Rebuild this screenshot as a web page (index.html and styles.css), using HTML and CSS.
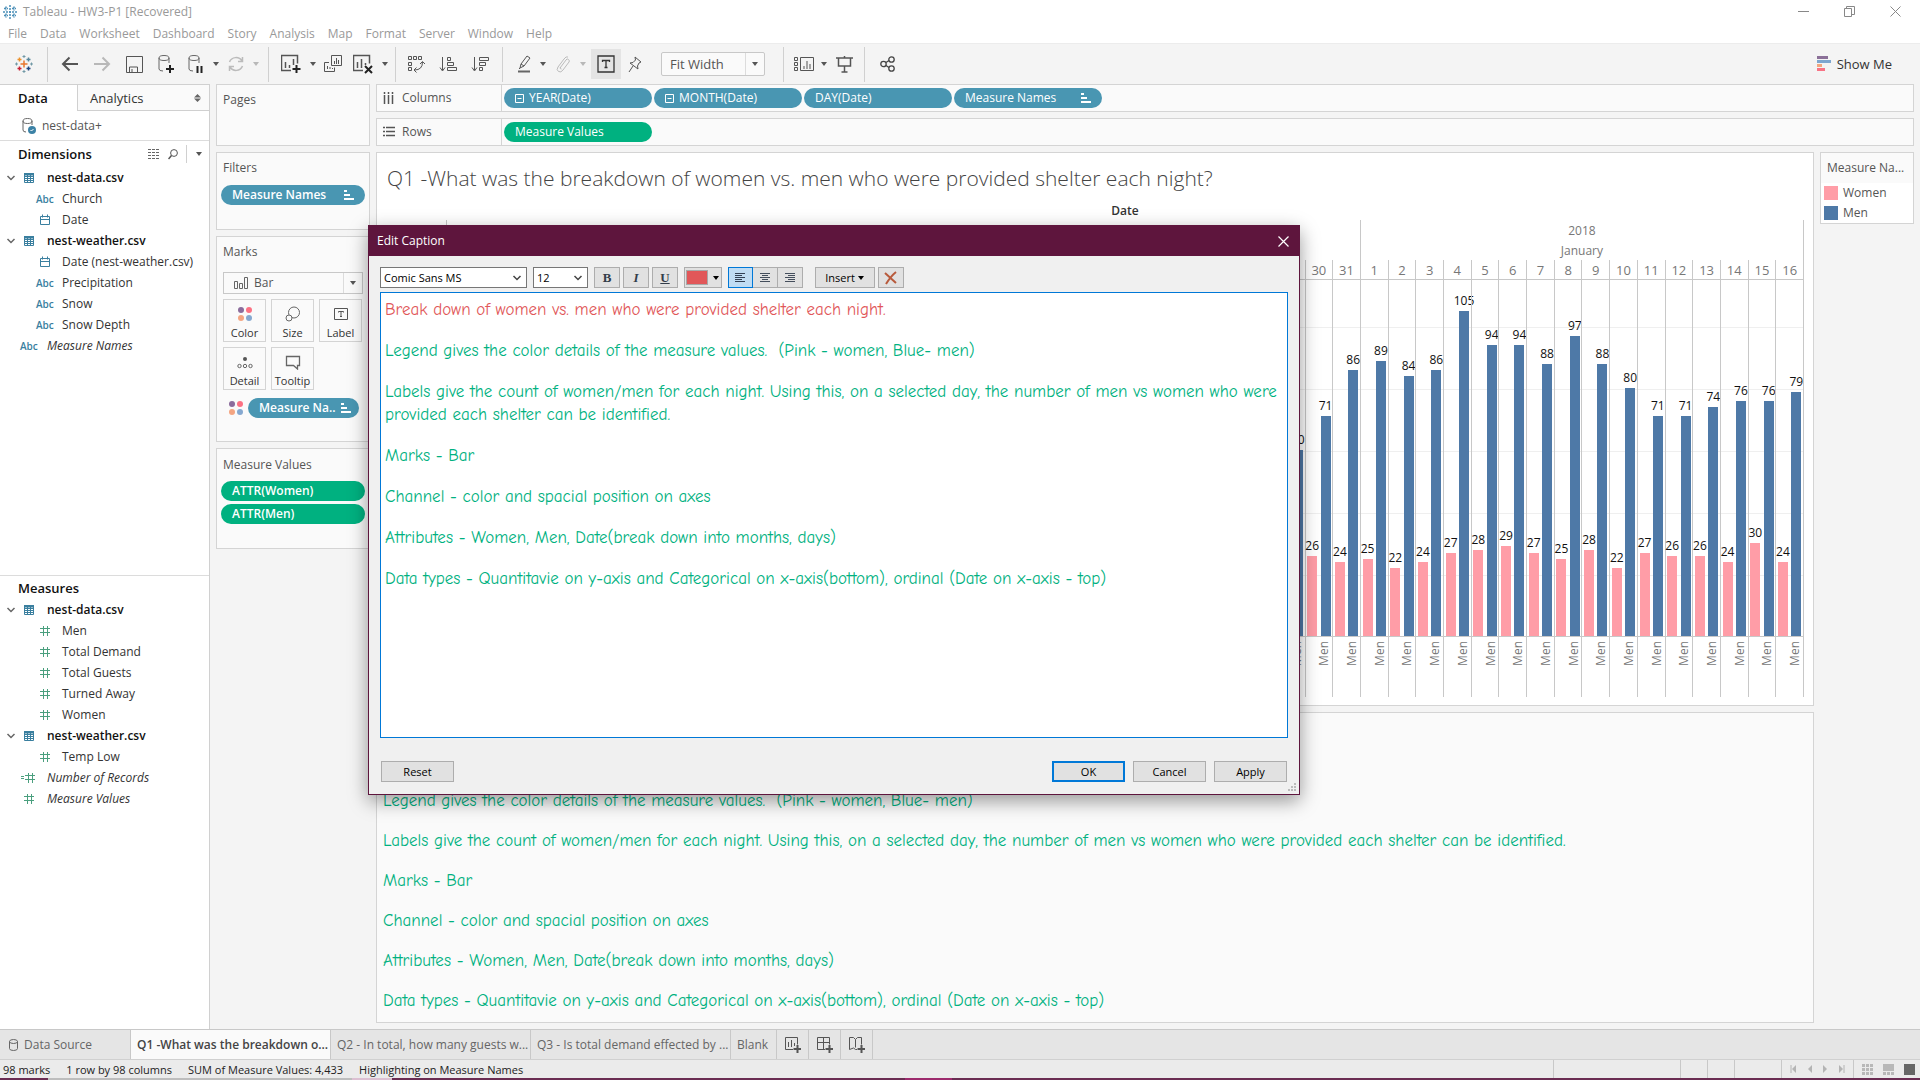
FILE: index.html
```html
<!DOCTYPE html>
<html lang="en">
<head>
<meta charset="utf-8">
<title>Tableau - HW3-P1 [Recovered]</title>
<link rel="stylesheet" href="styles.css">
</head>
<body>
<svg class="sprite" aria-hidden="true">
  <symbol id="caret" viewBox="0 0 8 6"><path d="M1 1h6L4 5z" fill="currentColor"/></symbol>
  <symbol id="chev" viewBox="0 0 10 10"><path d="M1.500 3L5 6.500 8.500 3" fill="none" stroke="currentColor" stroke-width="1.500"/></symbol>
  <symbol id="table" viewBox="0 0 10 10"><path d="M.5.5h9v9h-9zM0 3.500h10M0 5.500h10M0 7.500h10M3.500 2v8M6.500 2v8" fill="none" stroke="currentColor"/><path d="M0 0h10v2.500H0z" fill="currentColor"/></symbol>
  <symbol id="cal" viewBox="0 0 12 12"><path d="M1.500 2.500h9v8h-9zM1.500 5.500h9M3.500.5v3M8.500.5v3" fill="none" stroke="currentColor"/></symbol>
  <symbol id="hash" viewBox="0 0 12 12"><path d="M1 3.500h10M1 7.500h10M4.500 1v10M8.500 1v10" fill="none" stroke="currentColor"/></symbol>
  <symbol id="eqhash" viewBox="0 0 18 12"><path d="M1 4.500h3M1 6.500h3M5 3.500h10M5 7.500h10M8.500 1v10M12.500 1v10" fill="none" stroke="currentColor"/></symbol>
  <symbol id="sorted" viewBox="0 0 10 10"><path d="M0 0h3v2H0zM0 4h6v2H0zM0 8h10v2H0z" fill="currentColor"/></symbol>
  <symbol id="minus" viewBox="0 0 9 9"><path d="M.5.5h8v8h-8zM2.500 4.500h4" fill="none" stroke="currentColor"/></symbol>
  <symbol id="dots" viewBox="0 0 16 16"><circle cx="4" cy="4" r="3" fill="#8b6c9c"/><circle cx="12" cy="4" r="3" fill="#fc7183"/><circle cx="4" cy="12" r="3" fill="#f4a582"/><circle cx="12" cy="12" r="3" fill="#85a8d0"/></symbol>
</svg>

<header>
  <div class="titlebar">
    <svg class="logo-small" viewBox="0 0 16 16"><path d="M8 1v14M1 8h14M4 2.500v4M2 4.500h4M12 2.500v4M10 4.500h4M4 9.500v4M2 11.500h4M12 9.500v4M10 11.500h4" stroke="#4a8fb8" stroke-width="1.500" stroke-dasharray="2 1" fill="none"/></svg>
    <span>Tableau - HW3-P1 [Recovered]</span>
    <div class="winbtns">
      <button aria-label="Minimize"><svg viewBox="0 0 11 11"><path d="M0 5.500h11" stroke="#888"/></svg></button>
      <button aria-label="Restore"><svg viewBox="0 0 11 11"><path d="M.5 2.500h7v8h-7zM2.500 2.500v-2h8v8h-3" stroke="#888" fill="none"/></svg></button>
      <button aria-label="Close"><svg viewBox="0 0 11 11"><path d="M.5.5l10 10M10.500.5l-10 10" stroke="#888"/></svg></button>
    </div>
  </div>
  <nav class="menubar">
    <a href="#">File</a><a href="#">Data</a><a href="#">Worksheet</a><a href="#">Dashboard</a><a href="#">Story</a><a href="#">Analysis</a><a href="#">Map</a><a href="#">Format</a><a href="#">Server</a><a href="#">Window</a><a href="#">Help</a>
  </nav>
</header>

<div class="toolbar">
  <button class="tb home" aria-label="Start page"><svg width="18" height="18" viewBox="0 0 18 18" fill="none" stroke-width="1.500"><path d="M9 5.500v7M5.500 9h7" stroke="#e8762d"/><path d="M4.500 2.500v4M2.500 4.500h4" stroke="#eb912c"/><path d="M13.500 2.500v4M11.500 4.500h4" stroke="#59879b"/><path d="M4.500 11.500v4M2.500 13.500h4" stroke="#c72035"/><path d="M13.500 11.500v4M11.500 13.500h4" stroke="#1f447e"/><path d="M9 0v3M7.500 1.500h3M9 15v3M7.500 16.500h3M0 9h3M1.500 7.500v3M15 9h3M16.500 7.500v3" stroke="#7199a6" stroke-width="1"/></svg></button>
  <span class="sep"></span>
  <button class="tb" aria-label="Undo"><svg width="18" height="16" viewBox="0 0 18 16"><path d="M17 8H2M8.500 1.500L2 8l6.500 6.500" fill="none" stroke="#555" stroke-width="2"/></svg></button>
  <button class="tb" aria-label="Redo"><svg width="18" height="16" viewBox="0 0 18 16"><path d="M1 8h15M9.500 1.500L16 8l-6.500 6.500" fill="none" stroke="#b8b8b8" stroke-width="2"/></svg></button>
  <button class="tb" aria-label="Save"><svg width="17" height="17" viewBox="0 0 17 17"><path d="M.5.5h16v16H.5zM3.500 16v-5h8v5M6 13v3" fill="none" stroke="#555"/></svg></button>
  <button class="tb" aria-label="New data source"><svg width="18" height="20" viewBox="0 0 18 20"><ellipse cx="7" cy="4" rx="5" ry="2.500" fill="none" stroke="#666"/><path d="M2 4v11q0 2 4 2M12 4v5" fill="none" stroke="#666"/><path d="M13 11v8M9 15h8" stroke="#222" stroke-width="2"/></svg></button>
  <button class="tb mid" aria-label="Pause updates"><svg width="18" height="20" viewBox="0 0 18 20"><ellipse cx="7" cy="4" rx="5" ry="2.500" fill="none" stroke="#666"/><path d="M2 4v11q0 2 4 2M12 4v5" fill="none" stroke="#666"/><path d="M10.500 12v7M14.500 12v7" stroke="#222" stroke-width="2"/></svg></button>
  <svg class="car"><use href="#caret"/></svg>
  <button class="tb mid" aria-label="Refresh"><svg width="18" height="18" viewBox="0 0 18 18" fill="none" stroke="#bbb" stroke-width="1.500"><path d="M2.500 7A7 7 0 0 1 15 6M15.500 11A7 7 0 0 1 3 12M15.500 2v4.500H11M2.500 16v-4.500H7"/></svg></button>
  <svg class="car dim"><use href="#caret"/></svg>
  <span class="sep"></span>
  <button class="tb" aria-label="New worksheet"><svg width="20" height="20" viewBox="0 0 20 20"><path d="M10 16.500H.5v-15h16v8M4.500 8v6M8.500 11v3M12.500 5v6" fill="none" stroke="#555" stroke-width="1.500"/><path d="M15.500 11v8M11.500 15h8" stroke="#222" stroke-width="2"/></svg></button>
  <svg class="car"><use href="#caret"/></svg>
  <button class="tb mid" aria-label="Duplicate"><svg width="18" height="18" viewBox="0 0 18 18"><path d="M7.500.5h10v10h-10zM5 7.500H.5v9h10v-4M3.500 11v3M6 12v2M8.500 13v1M10.500 6v3M12.500 3v6M14.500 5v4" fill="none" stroke="#555"/></svg></button>
  <button class="tb" aria-label="Clear sheet"><svg width="20" height="20" viewBox="0 0 20 20"><path d="M10 16.500H.5v-15h16v8M4.500 8v6M8.500 5v9M12.500 9v2" fill="none" stroke="#555" stroke-width="1.500"/><path d="M12 12l7 7M19 12l-7 7" stroke="#222" stroke-width="2"/></svg></button>
  <svg class="car"><use href="#caret"/></svg>
  <span class="sep tight"></span>
  <button class="tb" aria-label="Swap rows and columns"><svg width="18" height="18" viewBox="0 0 18 18" fill="none" stroke="#555"><path d="M1.500 1.500h3v3h-3zM6.500 1.500h3v3h-3zM11.500 1.500h3v3h-3zM1.500 7.500h3v3h-3zM1.500 12.500h3v3h-3zM15.500 7q0 8-8 8M13 9l2.500-2.500L18 9M9.500 12.500L7 15l2.500 2.500"/></svg></button>
  <button class="tb" aria-label="Sort ascending"><svg width="18" height="16" viewBox="0 0 18 16" fill="none" stroke="#555"><path d="M3.500 1v13M1 11.500L3.500 15 6 11.500M8.500 1.500h3v3h-3zM8.500 6.500h6v3h-6zM8.500 11.500h9v3h-9z"/></svg></button>
  <button class="tb" aria-label="Sort descending"><svg width="18" height="16" viewBox="0 0 18 16" fill="none" stroke="#555"><path d="M3.500 1v13M1 11.500L3.500 15 6 11.500M8.500 1.500h9v3h-9zM8.500 6.500h6v3h-6zM8.500 11.500h3v3h-3z"/></svg></button>
  <span class="sep"></span>
  <button class="tb mid" aria-label="Highlight"><svg width="16" height="18" viewBox="-2 0 16 18"><path d="M3 13l1-4 6-8 3 2-6 8zM4 9l3 2M3 13l-1 1" fill="none" stroke="#555"/><path d="M1 16.500h12" stroke="#666" stroke-width="2"/></svg></button>
  <svg class="car"><use href="#caret"/></svg>
  <button class="tb mid" aria-label="Group"><svg width="14" height="17" viewBox="0 0 14 17"><path d="M4 12l6-8q1-2 2.500-.5T13 6l-6 8q-2 3-4.500 1.500T2 11l6-8q2-3 4-2M5.500 13q-2 0-1-2" fill="none" stroke="#bbb"/></svg></button>
  <svg class="car dim"><use href="#caret"/></svg>
  <button class="tb mid on" aria-label="Show mark labels"><svg width="18" height="18" viewBox="0 0 18 18"><path d="M1 1h16v16H1zM5.500 7V5.500h7V7M9 5.500v7M7.500 12.500h3" fill="none" stroke="#333" stroke-width="1.300"/></svg></button>
  <button class="tb mid" aria-label="Fix axes"><svg width="14" height="17" viewBox="0 0 14 17"><path d="M7 1l6 5-2 1-1.500 3 .5 3-8-6 3-.5L7.500 4zM5 10l-4 6" fill="none" stroke="#555"/></svg></button>
  <div class="combo fit"><select aria-label="Fit"><option>Fit Width</option></select><span class="drop"><svg class="car"><use href="#caret"/></svg></span></div>
  <span class="sep"></span>
  <button class="tb mid" aria-label="Show cards"><svg width="20" height="15" viewBox="0 0 20 15"><path d="M.5.5h3v3h-3zM.5 5.500h3v3h-3zM.5 10.500h3v3h-3zM6.500.5h13v13h-13zM10 9v3M13 4v8M16 7v5" fill="none" stroke="#555"/></svg></button>
  <svg class="car"><use href="#caret"/></svg>
  <button class="tb mid" aria-label="Presentation mode"><svg width="17" height="17" viewBox="0 0 17 17"><path d="M0 2h17M2.500 2v8h12V2M8.500 0v2M8.500 10v6M5.500 16h6" fill="none" stroke="#555" stroke-width="1.500"/></svg></button>
  <span class="sep"></span>
  <button class="tb" aria-label="Share"><svg width="15" height="16" viewBox="0 0 15 16" fill="none" stroke="#444" stroke-width="1.300"><circle cx="3.500" cy="8" r="2.700"/><circle cx="11.500" cy="3.500" r="2.700"/><circle cx="11.500" cy="12.500" r="2.700"/><path d="M6 6.500l3-2M6 9.500l3 2"/></svg></button>
  <button class="showme"><svg width="14" height="16" viewBox="0 0 14 16"><path d="M0 0h11v3H0z" fill="#8b7098"/><path d="M0 4h14v3H0z" fill="#7ea6cf"/><path d="M0 8h5v3H0z" fill="#f2a77f"/><path d="M0 12h8v3H0z" fill="#f87385"/></svg>Show Me</button>
</div>

<main class="workspace">
  <aside class="side">
    <div class="sidetabs"><button class="active">Data</button><button>Analytics<svg width="7" height="8" viewBox="0 0 7 8"><path d="M0 3.500L3.500 0 7 3.500zM0 4.500L3.500 8 7 4.500z" fill="#666"/></svg></button></div>
    <div class="source"><svg width="14" height="16" viewBox="0 0 14 16"><ellipse cx="5.500" cy="3" rx="4.500" ry="2.500" fill="none" stroke="#666"/><path d="M1 3v9q0 2 3 2M10 3v4" fill="none" stroke="#666"/><circle cx="10" cy="12" r="4" fill="#3c82a6"/><path d="M8.500 12l1 1 2-2" stroke="#fff" fill="none"/></svg>nest-data+</div>
    <section class="fields dims">
      <h2>Dimensions
        <span class="tools"><svg width="12" height="10" viewBox="0 0 12 10"><path d="M0 .5h12M0 3.500h12M0 6.500h12M0 9.500h12" stroke="#666" stroke-dasharray="3 1"/></svg><svg width="10" height="11" viewBox="0 0 10 11"><circle cx="6" cy="4" r="3.400" fill="none" stroke="#555"/><path d="M3.500 6.500L.5 10" stroke="#555" stroke-width="1.500"/></svg><i></i><svg class="car"><use href="#caret"/></svg></span>
      </h2>
      <ul>
        <li class="src"><svg><use href="#chev"/></svg><svg class="b"><use href="#table"/></svg>nest-data.csv</li>
        <li class="kid"><b>Abc</b>Church</li>
        <li class="kid"><svg class="b"><use href="#cal"/></svg>Date</li>
        <li class="src"><svg><use href="#chev"/></svg><svg class="b"><use href="#table"/></svg>nest-weather.csv</li>
        <li class="kid"><svg class="b"><use href="#cal"/></svg>Date (nest-weather.csv)</li>
        <li class="kid"><b>Abc</b>Precipitation</li>
        <li class="kid"><b>Abc</b>Snow</li>
        <li class="kid"><b>Abc</b>Snow Depth</li>
        <li class="top"><b>Abc</b><em>Measure Names</em></li>
      </ul>
    </section>
    <section class="fields meas">
      <h2>Measures</h2>
      <ul>
        <li class="src"><svg><use href="#chev"/></svg><svg class="b"><use href="#table"/></svg>nest-data.csv</li>
        <li class="kid"><svg class="g"><use href="#hash"/></svg>Men</li>
        <li class="kid"><svg class="g"><use href="#hash"/></svg>Total Demand</li>
        <li class="kid"><svg class="g"><use href="#hash"/></svg>Total Guests</li>
        <li class="kid"><svg class="g"><use href="#hash"/></svg>Turned Away</li>
        <li class="kid"><svg class="g"><use href="#hash"/></svg>Women</li>
        <li class="src"><svg><use href="#chev"/></svg><svg class="b"><use href="#table"/></svg>nest-weather.csv</li>
        <li class="kid"><svg class="g"><use href="#hash"/></svg>Temp Low</li>
        <li class="top"><svg class="g wide"><use href="#eqhash"/></svg><em>Number of Records</em></li>
        <li class="top"><svg class="g"><use href="#hash"/></svg><em>Measure Values</em></li>
      </ul>
    </section>
  </aside>

  <div class="cards">
    <section class="card pages"><h3>Pages</h3></section>
    <section class="card filters"><h3>Filters</h3><div class="pill blue">Measure Names<svg><use href="#sorted"/></svg></div></section>
    <section class="card marks"><h3>Marks</h3>
      <div class="combo mark"><svg class="baricon" viewBox="0 0 14 12"><path d="M.5 4.500h3v7h-3zM5.500 6.500h3v5h-3zM10.500.5h3v11h-3z" fill="none" stroke="#666"/></svg><select aria-label="Mark type"><option>Bar</option></select><span class="drop"><svg class="car"><use href="#caret"/></svg></span></div>
      <div class="markgrid">
        <button><svg><use href="#dots"/></svg>Color</button>
        <button><svg viewBox="0 0 16 16" fill="none" stroke="#666"><circle cx="9" cy="6.500" r="5.500"/><circle cx="4" cy="12" r="3" fill="#fafafa"/></svg>Size</button>
        <button><svg viewBox="0 0 16 16" fill="none" stroke="#555"><path d="M1.500 2.500h13v11h-13zM5.500 6.500v-1h5v1M8 5.500v5M7 10.500h2"/></svg>Label</button>
        <button><svg viewBox="0 0 16 16" fill="none" stroke="#666"><circle cx="8" cy="5" r="2" fill="#555" stroke="none"/><circle cx="2.500" cy="12" r="1.700"/><circle cx="8" cy="12" r="1.700"/><circle cx="13.500" cy="12" r="1.700"/></svg>Detail</button>
        <button><svg viewBox="0 0 16 16" fill="none" stroke="#666" stroke-width="1.300"><path d="M1.500 2.500h13v9h-2v3.500l-4-3.500h-7z"/></svg>Tooltip</button>
      </div>
      <div class="encoding"><svg><use href="#dots"/></svg><div class="pill blue">Measure Na..<svg><use href="#sorted"/></svg></div></div>
    </section>
    <section class="card values"><h3>Measure Values</h3><div class="pill green">ATTR(Women)</div><div class="pill green">ATTR(Men)</div></section>
  </div>

  <div class="sheet">
    <div class="shelf"><div class="name"><svg viewBox="0 0 12 12"><path d="M1.500 0v2M5.500 0v2M9.500 0v2M1.500 3v9M5.500 3v9M9.500 3v9" stroke="#555" stroke-width="1.500"/></svg>Columns</div>
      <div class="pill blue"><svg class="lead"><use href="#minus"/></svg>YEAR(Date)</div><div class="pill blue"><svg class="lead"><use href="#minus"/></svg>MONTH(Date)</div><div class="pill blue">DAY(Date)</div><div class="pill blue">Measure Names<svg><use href="#sorted"/></svg></div></div>
    <div class="shelf"><div class="name"><svg viewBox="0 0 12 12"><path d="M0 1.500h2M3 1.500h9M0 5.500h2M3 5.500h9M0 9.500h2M3 9.500h9" stroke="#555" stroke-width="1.500"/></svg>Rows</div><div class="pill green">Measure Values</div></div>
    <div class="canvas">
      <div class="view">
        <section class="viz">
          <h1>Q1 -What was the breakdown of women vs. men who were provided shelter each night?</h1>
          <div class="plotwrap">
            <div class="axistitle">Date</div>
            <div class="chart" id="chart"><div class="prior"></div><div class="year">2018</div><div class="month">January</div></div>
          </div>
        </section>
        <section class="caption hand">
          <p>Break down of women vs. men who were provided shelter each night.</p>
          <p>Legend gives the color details of the measure values.&nbsp; (Pink - women, Blue- men)</p>
          <p>Labels give the count of women/men for each night. Using this, on a selected day, the number of men vs women who were provided each shelter can be identified.</p>
          <p>Marks - Bar</p>
          <p>Channel - color and spacial position on axes</p>
          <p>Attributes - Women, Men, Date(break down into months, days)</p>
          <p>Data types - Quantitavie on y-axis and Categorical on x-axis(bottom), ordinal (Date on x-axis - top)</p>
        </section>
      </div>
      <aside class="legend"><h3>Measure Na...</h3><ul><li><i class="women"></i>Women</li><li><i class="men"></i>Men</li></ul></aside>
    </div>
  </div>
</main>

<nav class="sheettabs">
  <a href="#" class="ds"><svg width="9" height="12" viewBox="0 0 9 12"><path d="M.5 2.500v7q0 2 4 2t4-2v-7" fill="none" stroke="#666"/><ellipse cx="4.500" cy="2.500" rx="4" ry="2" fill="none" stroke="#666"/></svg>Data Source</a>
  <a href="#" class="tab current">Q1 -What was the breakdown o...</a>
  <a href="#" class="tab">Q2 - In total, how many guests w...</a>
  <a href="#" class="tab">Q3 - Is total demand effected by ...</a>
  <a href="#" class="short">Blank</a>
  <button aria-label="New worksheet"><svg viewBox="0 0 16 16"><path d="M8 12.500H.5V.5h12v7M3.500 5v5M6.500 3v7M9.500 6v3" fill="none" stroke="#555"/><path d="M12.500 8v8M8.500 12h8" stroke="#555" stroke-width="2"/></svg></button>
  <button aria-label="New dashboard"><svg viewBox="0 0 16 16"><path d="M8 12.500H.5V.5h12v7M.5 5.500h12M6.500.5v12" fill="none" stroke="#555"/><path d="M12.500 8v8M8.500 12h8" stroke="#555" stroke-width="2"/></svg></button>
  <button aria-label="New story"><svg viewBox="0 0 16 16"><path d="M8 12.500H6.500l-2-1.500-4 1.500V.5h4l2 2 2-2h4v7M6.500 2.500v8" fill="none" stroke="#555"/><path d="M12.500 8v8M8.500 12h8" stroke="#555" stroke-width="2"/></svg></button>
</nav>
<footer class="status">
  <span>98 marks</span><span>1 row by 98 columns</span><span>SUM of Measure Values: 4,433</span><span>Highlighting on Measure Names</span>
  <div class="cells"><i class="c1"></i><i class="c2"></i><i class="c2"></i><i class="c3"></i>
    <div class="steps"><button aria-label="First sheet"><svg viewBox="0 0 8 8"><path d="M1 0v8" stroke="#b4b4b4"/><path d="M6 0v8L2 4z" fill="#b4b4b4"/></svg></button><button aria-label="Previous sheet"><svg viewBox="0 0 8 8"><path d="M6 0v8L2 4z" fill="#b4b4b4"/></svg></button><button aria-label="Next sheet"><svg viewBox="0 0 8 8"><path d="M2 0v8l4-4z" fill="#b4b4b4"/></svg></button><button aria-label="Last sheet"><svg viewBox="0 0 8 8"><path d="M2 0v8l4-4z" fill="#b4b4b4"/><path d="M7 0v8" stroke="#b4b4b4"/></svg></button></div>
    <div class="views"><button aria-label="Sheet sorter"><svg viewBox="0 0 11 11"><path d="M0 1.500h11M0 5.500h11M0 9.500h11" stroke="#b8b8b8" stroke-width="3" stroke-dasharray="3 1"/></svg></button><button aria-label="Filmstrip"><svg viewBox="0 0 11 11"><path d="M0 0h11v7H0z" fill="#b8b8b8"/><path d="M0 9.500h11" stroke="#b8b8b8" stroke-width="3" stroke-dasharray="3 1"/></svg></button><button aria-label="Tabs"><svg viewBox="0 0 11 11"><path d="M0 0h11v11H0z" fill="#666"/></svg></button></div>
  </div>
</footer>
<div class="edge"></div>

<div class="dialog" role="dialog" aria-labelledby="dlg-title">
  <div class="dlg-head"><span id="dlg-title">Edit Caption</span><button aria-label="Close"><svg width="11" height="11" viewBox="0 0 11 11"><path d="M.5.5l10 10M10.500.5l-10 10" stroke="#fff" stroke-width="1.200"/></svg></button></div>
  <div class="dlg-body">
    <div class="format">
      <div class="combo dlg font"><select aria-label="Font"><option>Comic Sans MS</option></select><svg class="chev"><use href="#chev"/></svg></div>
      <div class="combo dlg size"><select aria-label="Font size"><option>12</option></select><svg class="chev"><use href="#chev"/></svg></div>
      <button class="fb serif">B</button><button class="fb serif it">I</button><button class="fb serif un">U</button>
      <button class="fb color" aria-label="Color"><i></i><svg class="car"><use href="#caret"/></svg></button>
      <div class="aligns">
        <button class="on" aria-label="Align left"><svg viewBox="0 0 11 11"><path d="M0 1.500h10M0 3.500h7M0 5.500h10M0 7.500h7M0 9.500h10" stroke="#334155"/></svg></button><button aria-label="Align center"><svg viewBox="0 0 11 11"><path d="M0 1.500h10M2 3.500h6M0 5.500h10M2 7.500h6M0 9.500h10" stroke="#444e5c"/></svg></button><button aria-label="Align right"><svg viewBox="0 0 11 11"><path d="M0 1.500h10M3 3.500h7M0 5.500h10M3 7.500h7M0 9.500h10" stroke="#444e5c"/></svg></button>
      </div>
      <button class="fb insert">Insert<svg class="car"><use href="#caret"/></svg></button>
      <button class="fb" aria-label="Clear"><svg width="14" height="14" viewBox="0 0 14 14"><path d="M1 2l11 10M12 1Q7 5 2 13" stroke="#b85a3c" stroke-width="2" fill="none"/></svg></button>
    </div>
    <div class="editor hand" contenteditable="true" role="textbox" aria-multiline="true" aria-label="Caption text" spellcheck="false">
      <p class="red">Break down of women vs. men who were provided shelter each night.</p>
      <p>Legend gives the color details of the measure values.&nbsp; (Pink - women, Blue- men)</p>
      <p>Labels give the count of women/men for each night. Using this, on a selected day, the number of men vs women who were provided each shelter can be identified.</p>
      <p>Marks - Bar</p>
      <p>Channel - color and spacial position on axes</p>
      <p>Attributes - Women, Men, Date(break down into months, days)</p>
      <p>Data types - Quantitavie on y-axis and Categorical on x-axis(bottom), ordinal (Date on x-axis - top)</p>
    </div>
    <div class="actions"><button>Reset</button><button class="ok">OK</button><button>Cancel</button><button>Apply</button></div>
  </div>
  <svg class="grip" viewBox="0 0 8 8"><path d="M6 0h2v2H6zM3 3h2v2H3zM6 3h2v2H6zM0 6h2v2H0zM3 6h2v2H3zM6 6h2v2H6z" fill="#bbb"/></svg>
</div>
<script src="script.js"></script>
</body>
</html>
```
FILE: styles.css
```css
* { box-sizing: border-box; }
body { margin: 0; min-height: 100vh; display: flex; flex-direction: column; position: relative; background: #f4f4f4; color: #333; font: 12px/16px "Open Sans", "Noto Sans", sans-serif; }
button, select { font: inherit; color: inherit; border: 0; background: none; padding: 0; margin: 0; border-radius: 0; }
h1, h2, h3, p, ul { margin: 0; padding: 0; font-weight: 400; }
h3 { font-size: 12px; }
ul { list-style: none; }
a { color: inherit; text-decoration: none; }
svg { display: block; flex: none; }
.sprite { position: absolute; width: 0; height: 0; }
.car { width: 8px; height: 6px; color: #555; }
.dim { color: #b8b8b8; }

header { background: #fff; height: 43px; color: #999; }
.titlebar { display: flex; align-items: center; height: 23px; padding-left: 2px; gap: 5px; }
.titlebar span { font-size: 12px; }
.logo-small { width: 16px; height: 16px; }
.winbtns { margin-left: auto; margin-right: 2px; display: flex; }
.winbtns button { width: 46px; height: 20px; display: grid; place-items: center; }
.winbtns svg { width: 11px; height: 11px; }
.menubar { display: flex; padding-left: 8px; gap: 13px; line-height: 22px; }

.toolbar { height: 41px; display: flex; align-items: center; border-top: 1px solid #ececec; }
.tb { width: 32px; height: 30px; display: grid; place-items: center; }
.tb.home { width: 41px; padding-left: 6px; }
.tb.mid { width: 28px; }
.tb.on { width: 30px; background: #e4e4e4; margin-left: 2px; }
.toolbar > .car { margin: 0 2px; }
.sep { width: 1px; height: 35px; background: #d0d0d0; margin: 0 6px; }
.tight { margin: 0 4px; }
.combo { display: flex; align-items: center; background: #fafafa; border: 1px solid #c8c8c8; }
.combo select { flex: 1; min-width: 0; appearance: none; height: 100%; padding-left: 8px; }
.drop { width: 19px; align-self: stretch; border-left: 1px solid #dcdcdc; display: grid; place-items: center; }
.fit { width: 104px; height: 24px; margin: 0 12px; font-size: 13px; border-radius: 2px; color: #555; }
.showme { margin: 0 28px 0 auto; display: flex; align-items: center; gap: 6px; font-size: 13px; }

.workspace { flex: 1; display: flex; gap: 6px; }
.side { width: 210px; background: #fff; border-right: 1px solid #d0d0d0; border-top: 1px solid #d0d0d0; display: flex; flex-direction: column; }
.sidetabs { display: flex; height: 26px; font-size: 13px; }
.sidetabs button { flex: 1; display: flex; align-items: center; justify-content: space-between; padding: 0 8px 0 12px; background: #fafafa; border-left: 1px solid #d0d0d0; border-bottom: 1px solid #d0d0d0; }
.sidetabs .active { flex: 0 0 77px; background: #fff; border: 0; font-weight: 600; color: #111; padding-left: 18px; }
.source { height: 30px; display: flex; align-items: center; gap: 6px; padding-left: 22px; border-bottom: 1px solid #dcdcdc; color: #555; }
.fields h2 { display: flex; align-items: center; height: 26px; padding-left: 18px; font-size: 13px; font-weight: 600; color: #111; }
.dims { flex: 434 1 0; }
.meas { flex: 454 1 0; border-top: 1px solid #dcdcdc; }
.fields.meas h2 { height: 24px; }
.tools { margin-left: auto; margin-right: 6px; display: flex; align-items: center; gap: 8px; }
.tools i { width: 1px; height: 18px; background: #d0d0d0; }
.fields li { display: flex; align-items: center; height: 21px; }
.fields li svg { width: 10px; height: 10px; color: #666; }
.fields li .b, .fields li b { color: #3a7f9f; }
.fields li .g { color: #4a9f7e; width: 12px; height: 12px; }
.fields li b { font-size: 10px; font-weight: 600; width: 18px; }
.src { padding-left: 6px; gap: 8px; font-weight: 600; color: #111; }
.src .b { margin-right: 5px; }
.kid { padding-left: 36px; gap: 8px; }
.fields .kid svg { width: 12px; height: 12px; margin: 0 3px; }
.top { padding-left: 20px; gap: 9px; }
.fields .top svg { margin: 0 3px; }
.fields .top .wide { width: 18px; margin: 0; }

.cards { width: 154px; display: flex; flex-direction: column; gap: 6px; }
.card { background: #fafafa; border: 1px solid #d4d4d4; }
.card h3 { padding: 0 6px; line-height: 30px; color: #555; }
.pages { height: 62px; }
.filters { height: 78px; }
.marks { height: 206px; }
.values { height: 101px; }
.pill { width: 144px; height: 20px; margin: 0 4px 3px; padding: 0 11px; border-radius: 10px; color: #fff; font-size: 12px; font-weight: 600; display: flex; align-items: center; gap: 5px; white-space: nowrap; }
.pill svg { width: 10px; height: 10px; margin-left: auto; }
.pill .lead { width: 9px; height: 9px; margin: 0; }
.blue { background: #4996b2; }
.green { background: #00b180; }
.filters .pill { margin-top: 2px; }
.card.values h3 { line-height: 32px; }
.mark { margin: 5px 6px 0; width: 140px; height: 22px; padding-left: 10px; color: #555; }
.mark select { padding-left: 6px; }
.baricon { width: 14px; height: 12px; }
.markgrid { display: grid; grid-template-columns: repeat(3, 43px); gap: 5px; margin: 5px 6px 0; }
.markgrid button { height: 43px; border: 1px solid #d4d4d4; display: flex; flex-direction: column; align-items: center; justify-content: space-between; padding: 6px 0 0; font-size: 11px; line-height: 17px; }
.markgrid svg { width: 16px; height: 16px; }
.encoding { display: flex; align-items: center; gap: 4px; padding: 8px 0 0 11px; }
.encoding > svg { width: 16px; height: 16px; }
.encoding .pill { width: 111px; margin: 0; }

.sheet { flex: 1; min-width: 0; display: flex; flex-direction: column; gap: 6px; padding: 0 6px 6px 0; }
.shelf { height: 28px; display: flex; align-items: center; gap: 2px; background: #fafafa; border: 1px solid #d4d4d4; }
.name { width: 125px; align-self: stretch; display: flex; align-items: center; gap: 7px; padding-left: 6px; border-right: 1px solid #d4d4d4; color: #555; }
.name svg { width: 12px; height: 12px; }
.shelf .pill { width: 148px; margin: 0; font-weight: 400; }
.canvas { flex: 1; display: flex; gap: 6px; align-items: stretch; }
.view { flex: 1; min-width: 0; display: grid; grid-template-rows: minmax(0, 555fr) minmax(0, 311fr); gap: 6px; }
.viz { background: #fff; border: 1px solid #d4d4d4; display: flex; flex-direction: column; padding-bottom: 8px; }
.viz h1 { padding: 9px 10px 7px; font-size: 21px; font-weight: 300; line-height: 32px; color: #444; white-space: nowrap; }
.plotwrap { flex: 1; margin: 0 9px 0 69px; display: flex; flex-direction: column; }
.axistitle { text-align: center; font-weight: 600; line-height: 20px; height: 19px; }
.chart { flex: 1; display: grid; grid-template-columns: repeat(49, minmax(0, 1fr)); grid-template-rows: 20px 20px 20px 1fr 60px; border-right: 1px solid #c8c8c8; color: #777; text-align: center; line-height: 21px; }
.prior { grid-row: 1 / 6; grid-column: 1 / 34; border-left: 1px solid #c8c8c8; }
.year { grid-row: 1; grid-column: 34 / 50; border-left: 1px solid #c8c8c8; }
.month { grid-row: 2; grid-column: 34 / 50; border-left: 1px solid #c8c8c8; }
.day { grid-row: 3; border-left: 1px solid #c8c8c8; border-bottom: 1px solid #c8c8c8; font-size: 13px; }
.bars { grid-row: 4; display: grid; grid-template-columns: repeat(2, minmax(0, 1fr)); border-left: 1px solid #c8c8c8; border-bottom: 1px solid #c8c8c8; background: repeating-linear-gradient(to top, transparent 0 60px, #efefef 60px 61px, transparent 61px 62px); }
.bars div { display: flex; flex-direction: column; justify-content: flex-end; align-items: center; min-width: 0; color: #111; line-height: 16px; }
.bars i { width: 10px; flex: none; margin-top: 2px; }
.women { background: #ff9da7; }
.men { background: #4e79a7; }
.series { grid-row: 5; border-left: 1px solid #c8c8c8; writing-mode: vertical-rl; display: flex; align-items: center; justify-content: flex-end; padding: 0 0 0 10px; }
.series span { transform: rotate(180deg); margin: 0 0 31px; }
.caption { background: #fafafa; border: 1px solid #d4d4d4; padding: 38px 6px 0; display: flex; flex-direction: column; line-height: 20px; gap: 20px; }
.hand { color: #00b180; font-family: "Comic Sans MS", "Comic Neue", "Open Sans", sans-serif; font-size: 17px; }
.legend { width: 94px; align-self: flex-start; background: #fff; border: 1px solid #d4d4d4; color: #555; }
.legend h3 { background: #fafafa; line-height: 30px; padding-left: 6px; white-space: nowrap; }
.legend li { display: flex; align-items: center; gap: 5px; height: 20px; padding-left: 3px; }
.legend i { width: 14px; height: 14px; }

.sheettabs { height: 31px; display: flex; background: #e5e5e5; border-top: 1px solid #c8c8c8; border-bottom: 1px solid #d0d0d0; color: #666; font-size: 12px; line-height: 30px; }
.sheettabs > * { border-right: 1px solid #c8c8c8; padding-left: 6px; white-space: nowrap; overflow: hidden; }
.ds { width: 131px; display: flex; align-items: center; gap: 6px; }
.tab { width: 200px; }
.sheettabs .ds { padding-left: 9px; }
.current { background: #fafafa; font-weight: 600; color: #444; }
.short { width: 46px; }
.sheettabs button { width: 32px; display: grid; place-items: center; padding: 0; }
.sheettabs button svg { width: 16px; height: 16px; }
.status { height: 18px; display: flex; gap: 16px; padding-left: 3px; background: #ebebeb; color: #222; font-size: 11px; line-height: 19px; }
.cells { margin-left: auto; display: flex; }
.cells > * { border-left: 1px solid #c8c8c8; }
.c1 { width: 127px; }
.c2 { width: 27px; }
.c3 { width: 47px; }
.steps { width: 72px; display: flex; align-items: center; justify-content: space-evenly; }
.steps svg { width: 8px; height: 8px; }
.views { width: 67px; display: flex; align-items: center; gap: 10px; padding-left: 8px; }
.views svg { width: 11px; height: 11px; }
.edge { height: 2px; background: linear-gradient(to right, #6a2c52 48px, #bdbdbd 48px 352px, #dcc0d2 352px 392px, #6a2c52 392px 905px, #9c2a6c 905px 952px, #6a2c52 952px); }

.dialog { position: absolute; left: 368px; top: 225px; width: 932px; background: #f0f0f0; border: 1px solid #5e153d; box-shadow: 0 6px 18px rgba(0, 0, 0, .4); color: #000; font-size: 11px; }
.dlg-head { height: 30px; display: flex; align-items: center; justify-content: space-between; padding: 0 10px 0 8px; background: #5e153d; color: #fff; font-size: 12px; }
.dlg-body { padding: 11px; }
.format { display: flex; height: 21px; }
.dlg { background: #fff; border-color: #777; height: 21px; padding-right: 4px; }
.dlg select { padding-left: 3px; }
.chev { width: 10px; height: 10px; color: #444; }
.font { width: 147px; margin-right: 6px; }
.size { width: 55px; margin-right: 6px; }
.fb { width: 26px; border: 1px solid #adadad; background: #e1e1e1; margin-right: 3px; display: flex; align-items: center; justify-content: center; gap: 3px; }
.serif { font: bold 13px/16px "Liberation Serif", serif; color: #333d4a; }
.it { font-style: italic; }
.un { text-decoration: underline; margin-right: 6px; }
.fb.color { width: 38px; margin-right: 6px; gap: 4px; }
.color i { width: 22px; height: 15px; background: #e15759; border: 1px solid #a8a8a8; }
.dialog .car { color: #000; }
.aligns { display: flex; margin-right: 12px; }
.aligns button { width: 25px; border: 1px solid #adadad; border-left-width: 0; background: #e1e1e1; display: grid; place-items: center; }
.aligns .on { border: 1px solid #0078d7; background: #c0dcf3; }
.aligns svg { width: 11px; height: 11px; }
.fb.insert { width: 60px; gap: 2px; }
.editor { margin-top: 4px; height: 446px; background: #fff; border: 1px solid #0078d7; padding: 5px 4px; line-height: 23px; outline: 0; }
.editor p { margin-bottom: 18px; }
.red { color: #e15759; }
.actions { display: flex; gap: 8px; margin-top: 23px; padding: 0 1px 1px; }
.actions button { width: 73px; height: 21px; border: 1px solid #adadad; background: #e1e1e1; }
.actions button:first-child { margin-right: auto; }
.actions .ok { border: 2px solid #0078d7; }
.grip { position: absolute; right: 3px; bottom: 3px; width: 8px; height: 8px; }
```
FILE: script.js
```js
// One entry per night: [day, women, men]. Null leaves out that bar and its label.
const nights = [
  [29, null, 60], [30, 26, 71], [31, 24, 86], [1, 25, 89], [2, 22, 84], [3, 24, 86], [4, 27, 105],
  [5, 28, 94], [6, 29, 94], [7, 27, 88], [8, 25, 97], [9, 28, 88], [10, 22, 80], [11, 27, 71],
  [12, 26, 71], [13, 26, 74], [14, 24, 76], [15, 30, 76], [16, 24, 79]
];
const axisMax = 115;
const chart = document.getElementById("chart");
const bar = (kind, v) => v === null ? "<div></div>"
  : `<div>${v}<i class="${kind}" style="height:${(v / axisMax * 100).toFixed(2)}%"></i></div>`;
nights.forEach(([day, women, men], k) => {
  const col = 50 - nights.length + k;
  const add = (cls, html) => {
    const el = document.createElement("div");
    el.className = cls;
    el.style.gridColumn = col;
    el.innerHTML = html;
    chart.append(el);
  };
  add("day", day);
  add("bars", bar("women", women) + bar("men", men));
  add("series", "<span>Men</span>");
});
```
